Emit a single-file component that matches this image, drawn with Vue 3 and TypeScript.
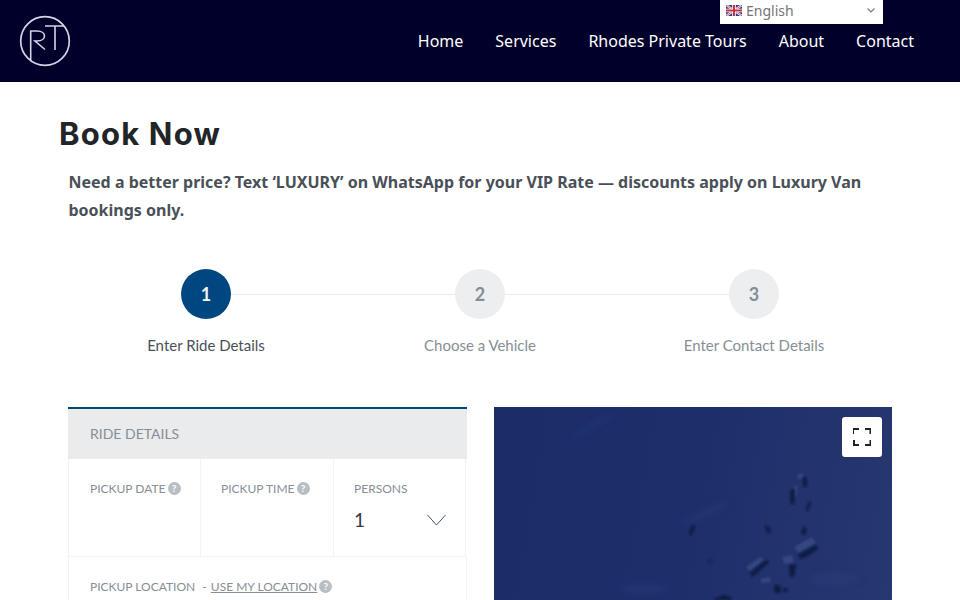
<template>
  <div class="page">
    <header class="topbar">
      <svg class="logo" width="52" height="52" viewBox="0 0 52 52" fill="none" stroke="#d4d4e6" stroke-width="1.6">
        <circle cx="26" cy="26" r="24.3" stroke-width="1.7" />
        <path d="M11.7 46V16H18C28 16 28 26 18 26H16L26 34.5" />
        <path d="M26 11H45M36 11V35" />
      </svg>
      <nav class="nav">
        <a v-for="item in navItems" :key="item">{{ item }}</a>
      </nav>
      <div class="lang">
        <svg width="16" height="11" viewBox="0 0 16 11">
          <rect width="16" height="11" fill="#2b3f86" />
          <path d="M0 0L16 11M16 0L0 11" stroke="#fff" stroke-width="2.2" />
          <path d="M0 0L16 11M16 0L0 11" stroke="#c8313e" stroke-width="0.8" />
          <path d="M8 0V11M0 5.5H16" stroke="#fff" stroke-width="3.6" />
          <path d="M8 0V11M0 5.5H16" stroke="#c8313e" stroke-width="2" />
        </svg>
        <span>English</span>
        <svg class="lang-caret" width="8" height="5" viewBox="0 0 8 5" fill="none" stroke="#777" stroke-width="1.1">
          <path d="M0.5 0.5L4 4L7.5 0.5" />
        </svg>
      </div>
    </header>

    <main class="content">
      <h1>Book Now</h1>
      <p class="notice">
        Need a better price? Text ‘LUXURY’ on WhatsApp for your VIP Rate — discounts apply on Luxury Van bookings only.
      </p>

      <ol class="steps">
        <li v-for="(step, i) in steps" :key="step" class="step" :class="{ active: i === 0 }">
          <span class="dot">{{ i + 1 }}</span>
          <span class="step-label">{{ step }}</span>
        </li>
      </ol>

      <section class="booking">
        <div class="panel">
          <div class="panel-head">RIDE DETAILS</div>
          <div class="row three">
            <div class="cell">
              <label>PICKUP DATE <i class="help">?</i></label>
            </div>
            <div class="cell">
              <label>PICKUP TIME <i class="help">?</i></label>
            </div>
            <div class="cell persons">
              <label>PERSONS</label>
              <div class="select">
                <span>1</span>
                <svg width="19" height="12" viewBox="0 0 19 12" fill="none" stroke="#34566e" stroke-width="1">
                  <path d="M0.5 1L9.5 11L18.5 1" />
                </svg>
              </div>
            </div>
          </div>
          <div class="row location">
            <label>PICKUP LOCATION <span class="sep">-</span> <u>USE MY LOCATION</u> <i class="help">?</i></label>
          </div>
        </div>

        <div class="map">
          <svg class="terrain" viewBox="0 0 398 193" preserveAspectRatio="none">
            <defs>
              <filter id="soft" x="-30%" y="-30%" width="160%" height="160%">
                <feGaussianBlur stdDeviation="3" />
              </filter>
              <filter id="crisp" x="-30%" y="-30%" width="160%" height="160%">
                <feGaussianBlur stdDeviation="1" />
              </filter>
            </defs>
            <g fill="#2e3f7c" opacity="0.45" filter="url(#soft)">
              <ellipse cx="100" cy="18" rx="24" ry="2" transform="rotate(-30 100 18)" />
              <ellipse cx="212" cy="106" rx="26" ry="3" transform="rotate(-24 212 106)" />
              <ellipse cx="150" cy="182" rx="24" ry="4" />
              <ellipse cx="340" cy="172" rx="26" ry="6" />
            </g>
            <g fill="#36467f" filter="url(#crisp)">
              <path d="M252 160L266 150L270 153L256 164Z" />
              <path d="M300 140L318 130L322 136L304 146Z" />
              <path d="M288 150L298 148L300 156L290 157Z" />
              <path d="M266 172L276 170L277 175L268 176Z" />
              <path d="M300 80L304 78L302 90L299 90Z" />
              <path d="M303 68L309 66L310 71L304 72Z" />
            </g>
            <g fill="#111a42" filter="url(#crisp)">
              <path d="M309 69L313 72L313 80L309 79Z" />
              <path d="M297 82L301 82L300 97L296 96Z" />
              <path d="M315 94L317 96L314 104L312 102Z" />
              <path d="M198 118L201 120L197 129L195 126Z" />
              <path d="M271 118L276 121L277 126L273 125Z" />
              <path d="M310 119L313 124L311 128L307 126Z" />
              <path d="M256 166L272 153L275 155L264 165L258 170Z" />
              <path d="M304 148L322 138L324 142L312 150L306 152Z" />
              <path d="M295 158L302 157L300 169L296 170Z" />
              <path d="M280 178L286 178L287 186L281 186Z" />
              <path d="M289 181L294 182L293 185L289 185Z" />
              <path d="M220 192L230 188L238 191L237 193H220Z" />
              <ellipse cx="216" cy="154" rx="2" ry="2.5" opacity="0.5" />
            </g>
          </svg>
          <button class="fullscreen" aria-label="Toggle fullscreen">
            <svg width="18" height="18" viewBox="0 0 18 18" fill="none" stroke="#222" stroke-width="2">
              <path d="M0 6V1H6M12 1H17.5V6M17.5 12V17H12M6 17H1V12" />
            </svg>
          </button>
        </div>
      </section>
    </main>
  </div>
</template>

<script setup lang="ts">
const navItems: string[] = ['Home', 'Services', 'Rhodes Private Tours', 'About', 'Contact']
const steps: string[] = ['Enter Ride Details', 'Choose a Vehicle', 'Enter Contact Details']
</script>

<style>
html,
body {
  margin: 0;
  background: #fff;
  overflow: hidden;
}
</style>

<style scoped>
.page {
  height: 600px;
  overflow: hidden;
  font-family: "Lato", sans-serif;
}

.topbar {
  position: relative;
  height: 82px;
  box-sizing: border-box;
  padding: 0 46px 0 19px;
  display: flex;
  align-items: center;
  justify-content: space-between;
  background: #00002a;
}

.logo {
  flex: none;
}

.nav {
  display: flex;
  gap: 32px;
  font-family: "Noto Sans", sans-serif;
  font-size: 16px;
  color: #fff;
}

.lang {
  position: absolute;
  left: 720px;
  top: 0;
  width: 163px;
  height: 24px;
  box-sizing: border-box;
  padding: 0 6px 3px;
  display: flex;
  align-items: center;
  gap: 4px;
  background: #fff;
  font-family: "Noto Sans", sans-serif;
  font-size: 14px;
  color: #757575;
}

.lang-caret {
  margin-left: auto;
  margin-right: 2px;
}

.content {
  padding: 0 68px;
}

h1 {
  margin: 32px 0 0 -9px;
  font-family: "Inter", sans-serif;
  font-size: 31px;
  line-height: 40px;
  font-weight: 700;
  letter-spacing: 1.2px;
  color: #212529;
}

.notice {
  margin: 14px 0 0 0.5px;
  font-family: "Noto Sans", sans-serif;
  font-size: 16px;
  line-height: 28px;
  font-weight: 700;
  color: #495057;
}

.steps {
  list-style: none;
  margin: 45px 0 0 1px;
  padding: 0;
  display: grid;
  grid-template-columns: repeat(3, 1fr);
  width: 822px;
}

.step {
  position: relative;
  display: flex;
  flex-direction: column;
  align-items: center;
  gap: 16px;
  color: #868e96;
  font-size: 15px;
}

.step:not(:last-child)::after {
  content: "";
  position: absolute;
  top: 25px;
  left: 50%;
  width: 100%;
  height: 1px;
  background: #e9ecef;
}

.dot {
  position: relative;
  z-index: 1;
  width: 50px;
  height: 50px;
  border-radius: 50%;
  display: flex;
  align-items: center;
  justify-content: center;
  background: #eceef0;
  color: #868e96;
  font-size: 18px;
  font-weight: 700;
}

.step-label {
  line-height: 20px;
}

.step.active {
  color: #495057;
}

.step.active .dot {
  background: #004680;
  color: #f1f5f9;
}

.booking {
  margin-top: 52px;
  display: flex;
  justify-content: space-between;
  width: 824px;
}

.panel {
  width: 399px;
  box-sizing: border-box;
  font-size: 12px;
  color: #868e96;
}

.panel-head {
  height: 52px;
  box-sizing: border-box;
  border-top: 2px solid #004a70;
  padding: 0 0 2px 22px;
  display: flex;
  align-items: center;
  background: #e9ebec;
  font-size: 14px;
}

.row.three {
  display: grid;
  grid-template-columns: 132px 133px 132px;
  width: 398px;
  height: 98px;
  box-sizing: border-box;
  border: 1px solid #f1f3f5;
  border-top: 0;
}

.cell {
  padding: 23px 0 0 20px;
  border-right: 1px solid #f1f3f5;
  line-height: 14px;
}

.cell:first-child {
  padding-left: 21px;
}

.cell:last-child {
  border-right: 0;
}

.help {
  display: inline-flex;
  width: 13px;
  height: 13px;
  margin: -4px 0 -4px -1px;
  align-items: center;
  justify-content: center;
  border-radius: 50%;
  background: #b9bec3;
  color: #fff;
  font-size: 10px;
  font-style: normal;
  font-weight: 700;
  vertical-align: 1px;
}

.persons .select {
  margin: 12px 20px 0 0;
  display: flex;
  align-items: center;
  justify-content: space-between;
  font-size: 19px;
  line-height: 24px;
  color: #343a40;
}

.row.location {
  width: 399px;
  box-sizing: border-box;
  padding: 22px 0 0 21px;
  border: 1px solid #f1f3f5;
  border-top: 0;
  height: 60px;
}

.sep {
  margin: 0 1px 0 4px;
}

.map {
  position: relative;
  width: 398px;
  height: 193px;
  background: linear-gradient(100deg, #1a2d69 0%, #1d2f6b 50%, #27376f 100%);
}

.terrain {
  position: absolute;
  inset: 0;
  width: 100%;
  height: 100%;
}

.fullscreen {
  position: absolute;
  top: 10px;
  right: 10px;
  width: 40px;
  height: 40px;
  padding: 0;
  border: 0;
  border-radius: 3px;
  background: #fff;
  display: flex;
  align-items: center;
  justify-content: center;
}
</style>
